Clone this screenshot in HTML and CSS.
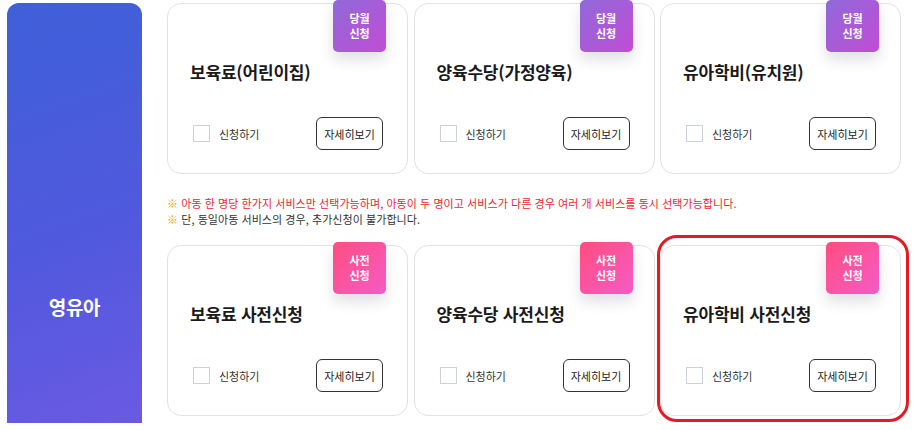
FILE: index.html
```html
<!DOCTYPE html>
<html lang="ko">
<head>
<meta charset="utf-8">
<link rel="stylesheet" href="styles.css">
</head>
<body>
<div class="page">
  <aside class="side">
    <div class="side-title">영유아</div>
  </aside>
  <main class="content">
    <div class="cards">
      <div class="card">
        <div class="badge badge-month">당월<br>신청</div>
        <h3 class="title">보육료(어린이집)</h3>
        <div class="foot">
          <label class="check"><span class="box"></span>신청하기</label>
          <button class="more">자세히보기</button>
        </div>
      </div>
      <div class="card">
        <div class="badge badge-month">당월<br>신청</div>
        <h3 class="title">양육수당(가정양육)</h3>
        <div class="foot">
          <label class="check"><span class="box"></span>신청하기</label>
          <button class="more">자세히보기</button>
        </div>
      </div>
      <div class="card">
        <div class="badge badge-month">당월<br>신청</div>
        <h3 class="title">유아학비(유치원)</h3>
        <div class="foot">
          <label class="check"><span class="box"></span>신청하기</label>
          <button class="more">자세히보기</button>
        </div>
      </div>
    </div>
    <div class="notes">
      <p class="note note-red"><span class="mark">※</span> 아동 한 명당 한가지 서비스만 선택가능하며, 아동이 두 명이고 서비스가 다른 경우 여러 개 서비스를 동시 선택가능합니다.</p>
      <p class="note"><span class="mark">※</span> 단, 동일아동 서비스의 경우, 추가신청이 불가합니다.</p>
    </div>
    <div class="cards">
      <div class="card">
        <div class="badge badge-pre">사전<br>신청</div>
        <h3 class="title">보육료 사전신청</h3>
        <div class="foot">
          <label class="check"><span class="box"></span>신청하기</label>
          <button class="more">자세히보기</button>
        </div>
      </div>
      <div class="card">
        <div class="badge badge-pre">사전<br>신청</div>
        <h3 class="title">양육수당 사전신청</h3>
        <div class="foot">
          <label class="check"><span class="box"></span>신청하기</label>
          <button class="more">자세히보기</button>
        </div>
      </div>
      <div class="card card-focus">
        <div class="focus-ring"></div>
        <div class="badge badge-pre">사전<br>신청</div>
        <h3 class="title">유아학비 사전신청</h3>
        <div class="foot">
          <label class="check"><span class="box"></span>신청하기</label>
          <button class="more">자세히보기</button>
        </div>
      </div>
    </div>
  </main>
</div>
</body>
</html>
```

FILE: styles.css
```css
* { box-sizing: border-box; }
html, body { margin: 0; padding: 0; background: #fff; }
body {
  font-family: "Noto Sans CJK KR", "Noto Sans", sans-serif;
  color: #222;
  overflow: hidden;
}
.page {
  display: flex;
  align-items: flex-start;
  padding: 3px 0 0 7px;
  gap: 25px;
}
.side {
  width: 135px;
  height: 420px;
  flex: none;
  border-radius: 12px 12px 0 0;
  background: linear-gradient(160deg, #3f60d8 0%, #5059de 55%, #6a5ae2 100%);
  display: flex;
  justify-content: center;
  padding-top: 290px;
}
.side-title {
  color: #fff;
  font-size: 19px;
  font-weight: 700;
  line-height: 28px;
  letter-spacing: -0.3px;
}
.content {
  display: flex;
  flex-direction: column;
}
.cards {
  display: grid;
  grid-template-columns: repeat(3, 241px);
  column-gap: 5.5px;
}
.card {
  position: relative;
  height: 171px;
  border: 1px solid #e2e2e6;
  border-radius: 14px;
  background: #fff;
  display: flex;
  flex-direction: column;
  padding: 55px 24px 23px 22px;
}
.badge {
  position: absolute;
  top: -4px;
  right: 21px;
  width: 53px;
  height: 52px;
  border-radius: 5px;
  color: #fff;
  font-size: 11px;
  font-weight: 700;
  line-height: 15px;
  text-align: center;
  display: flex;
  align-items: center;
  justify-content: center;
  box-shadow: 0 8px 14px rgba(40, 40, 80, 0.14);
}
.badge-month { background: linear-gradient(135deg, #8f6ad8 0%, #c24cd6 100%); }
.badge-pre { background: linear-gradient(135deg, #ff4d80 0%, #f55bc6 100%); }
.title {
  margin: 0;
  font-size: 17px;
  font-weight: 700;
  line-height: 26px;
  color: #1a1a1a;
  letter-spacing: -0.2px;
}
.foot {
  margin-top: auto;
  display: flex;
  align-items: center;
  justify-content: space-between;
}
.check {
  display: flex;
  align-items: center;
  gap: 9px;
  font-size: 11px;
  color: #333;
  letter-spacing: 0;
  padding-left: 3px;
}
.box {
  width: 17px;
  height: 17px;
  border: 1px solid #cdd1de;
  background: #fff;
}
.more {
  width: 67px;
  height: 33px;
  border: 1px solid #333;
  border-radius: 6px;
  background: #fff;
  font-family: inherit;
  font-size: 11px;
  color: #222;
  letter-spacing: 0;
  padding: 0;
}
.notes {
  padding: 21px 0 18px 0;
}
.note {
  margin: 0;
  font-size: 11px;
  line-height: 16px;
  color: #333;
  letter-spacing: 0.06px;
}
.note-red { color: #ea2530; }
.mark { color: #f39a1e; }
.focus-ring {
  position: absolute;
  left: -4px;
  top: -11px;
  right: -9px;
  bottom: -7px;
  border: 3px solid #e51b24;
  border-radius: 20px;
  pointer-events: none;
}
```
